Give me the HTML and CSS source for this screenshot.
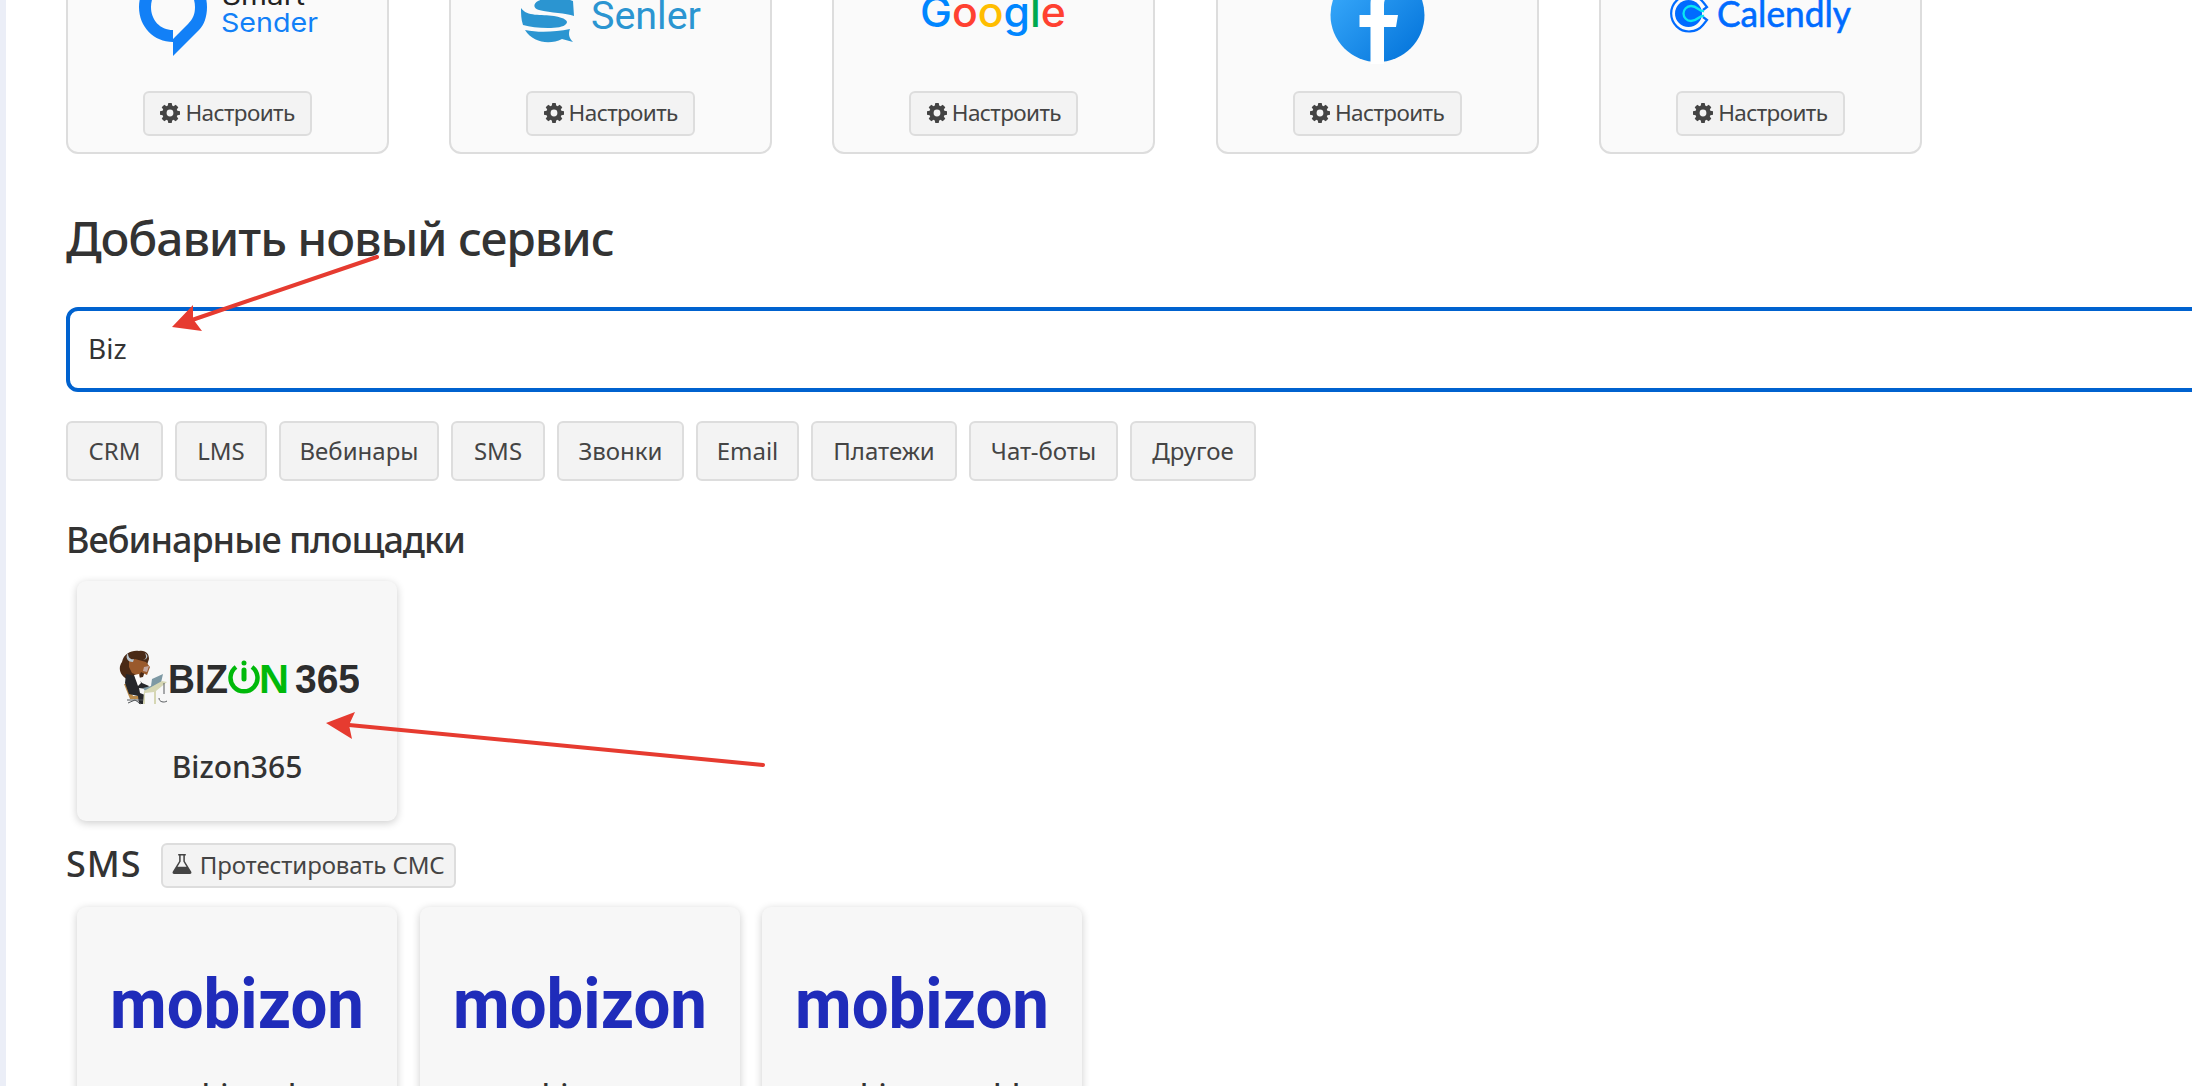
FILE: index.html
```html
<!DOCTYPE html>
<html lang="ru">
<head>
  <meta charset="UTF-8">
  <title>Интеграции</title>
  <link rel="stylesheet" href="styles.css">
</head>
<body>
  <!-- Shared icons -->
  <svg class="sprite">
    <symbol id="cog" viewBox="0 0 20 20">
      <path fill-rule="evenodd" d="M8.3 0h3.4l.5 2.6 1.3.6L15.700 1.700l2.600 2.600-1.500 2.200.6 1.300 2.600.5v3.400l-2.600.5-.6 1.300 1.500 2.200-2.600 2.600-2.200-1.500-1.300.6-.5 2.600H8.300l-.5-2.600-1.300-.6-2.200 1.500-2.600-2.600 1.500-2.200-.6-1.300L0 11.700V8.300l2.600-.5.6-1.300L1.700 4.300l2.600-2.600 2.200 1.500 1.300-.6zM10 6.600a3.400 3.400 0 1 0 0 6.800 3.400 3.400 0 0 0 0-6.800z"/>
    </symbol>
    <symbol id="flask" viewBox="0 0 20 21">
      <path fill-rule="evenodd" d="M6 0h8v1.500h-1v6l6.600 11c.8 1.300.1 2.500-1.300 2.500H1.700C.3 21-.4 19.800.4 18.500L7 7.500v-6H6zM8.600 1.500V8l-3.300 5.500h9.400L11.400 8V1.500z"/>
    </symbol>
    <symbol id="mobizon" viewBox="0 0 248 54">
      <text class="mobizon-text" x="-3" y="53" textLength="254" lengthAdjust="spacingAndGlyphs">mobizon</text>
    </symbol>
  </svg>

  <main class="page">
    <!-- Connected services -->
    <section class="connected">
      <div class="service">
        <svg class="service-logo" viewBox="0 0 240 130">
          <path fill="#1280f7" fill-rule="evenodd" d="M65 18c19 0 34 15 34 35 0 10-3 18-8 23L65 102V88C46 88 31 73 31 53S46 18 65 18zM65 30c-13 0-22 10-22 23s9 23 22 23v9l15-15c5-5 7-10 7-17 0-13-9-23-22-23z"/>
          <text class="smart" x="114" y="51" textLength="83" lengthAdjust="spacingAndGlyphs">Smart</text>
          <text class="smart sender" x="113" y="78" textLength="97" lengthAdjust="spacingAndGlyphs">Sender</text>
        </svg>
        <button class="btn btn-config"><svg class="icon"><use href="#cog"/></svg>Настроить</button>
      </div>
      <div class="service">
        <svg class="service-logo" viewBox="0 0 240 130">
          <g fill="#2b95d1">
            <path d="M82 47l1 15c-8-3-23-3-35-6-6-2-6-6-1-9 8-4 25-4 35 0z"/>
            <path d="M30 54c6 9 20 6 33 8 11 2 15 5 12 8-2 3-10 4-18 4-10 0-18-1-25-3-2-6-2-11-2-17z"/>
            <path d="M34 76c14 3 30 2 45-1-2 5-1 9 3 13l-11-3c-12 6-29 4-37-9z"/>
          </g>
          <text class="senler" x="100" y="75" textLength="110" lengthAdjust="spacingAndGlyphs">Senler</text>
        </svg>
        <button class="btn btn-config"><svg class="icon"><use href="#cog"/></svg>Настроить</button>
      </div>
      <div class="service">
        <svg class="service-logo" viewBox="0 0 240 130">
          <text class="google" x="46" y="73" textLength="146" lengthAdjust="spacingAndGlyphs"><tspan fill="#0086ff">G</tspan><tspan fill="#ff4131">o</tspan><tspan fill="#ffbd00">o</tspan><tspan fill="#0086ff">g</tspan><tspan fill="#00a94f">l</tspan><tspan fill="#ff4131">e</tspan></text>
        </svg>
        <button class="btn btn-config"><svg class="icon"><use href="#cog"/></svg>Настроить</button>
      </div>
      <div class="service">
        <svg class="service-logo" viewBox="0 0 240 130">
          <defs>
            <linearGradient id="fb" x1="0" y1="0" x2="1" y2="1">
              <stop offset="0" stop-color="#3fb0ff"/>
              <stop offset="1" stop-color="#0070d8"/>
            </linearGradient>
          </defs>
          <circle cx="120.500" cy="61" r="47" fill="url(#fb)"/>
          <path fill="#fff" d="M113.500 110V73h-11V61h11V50c0-13 8-20 19-20h8v11h-5c-6 0-8.500 4-8.500 10v10h14l-2 12h-12v37z"/>
        </svg>
        <button class="btn btn-config"><svg class="icon"><use href="#cog"/></svg>Настроить</button>
      </div>
      <div class="service">
        <svg class="service-logo" viewBox="0 0 240 130">
          <path fill="none" stroke="#006bff" stroke-width="2.200" d="M63 48a18 18 0 1 0 0 23l4-5-4-3M63 48l4 5-4 3"/>
          <circle cx="48.500" cy="59.500" r="13.500" fill="#006bff"/>
          <path fill="none" stroke="#0ae8f0" stroke-width="2.300" d="M64 57c-5 1-6-5-13-5a7.500 7.500 0 0 0 0 15c7 0 8-6 13-5"/>
          <text class="calendly" x="77" y="73" textLength="134" lengthAdjust="spacingAndGlyphs">Calendly</text>
        </svg>
        <button class="btn btn-config"><svg class="icon"><use href="#cog"/></svg>Настроить</button>
      </div>
    </section>

    <!-- Search -->
    <h1>Добавить новый сервис</h1>
    <input class="search" type="text" value="Biz">

    <div class="filters">
      <button class="btn btn-crm">CRM</button>
      <button class="btn btn-lms">LMS</button>
      <button class="btn btn-webinars">Вебинары</button>
      <button class="btn btn-sms">SMS</button>
      <button class="btn btn-calls">Звонки</button>
      <button class="btn btn-email">Email</button>
      <button class="btn btn-payments">Платежи</button>
      <button class="btn btn-bots">Чат-боты</button>
      <button class="btn btn-other">Другое</button>
    </div>

    <!-- Webinar platforms -->
    <h2>Вебинарные площадки</h2>
    <div class="cards">
      <div class="card">
        <svg class="bizon-logo" viewBox="0 0 240 56">
          <!-- bison at the desk -->
          <path fill="#4a2a16" d="M3 12C5 3 13 0 20 1c7-1 10 3 10 8l-6 18-14 3C2 27-2 19 3 12z"/>
          <path fill="#9a5a2c" d="M10 11l6-2 11 3 4 5-3 8-6-3-2 4-7-3-3-6z"/>
          <path fill="#b9c6cf" d="M9 3c0 5 3 7 6 6l-1 3C8 12 6 7 9 3zM26 3c2 4 1 6-2 7l3-1c2-2 2-4-1-6z"/>
          <path fill="#c3a7a0" d="M25 17l5-1-2 6-4-1z"/>
          <path fill="#b98a4a" d="M5 34h4l5 12h10v3H11z"/>
          <path fill="#26272b" d="M7 24l10 2 6 7 7 3-2 3-8-1 1 5 5 2-2 9h-4l-1-8-9-2-4-11z"/>
          <path fill="#fff" d="M15 25l5-1 2 9-3 3z"/>
          <path fill="#7d99a4" d="M33 29l11-5-3 13-15 4-2-3 8-2z"/>
          <path fill="#d6d7b4" d="M25 41l18-10 5 1-11 9v13h-2V42l-9 1v11h-2z"/>
          <path fill="none" stroke="#55595c" d="M45 33v11M8 50h16M9 53l7-3 6 4M40 48c0 4 5 5 8 3"/>
          <text class="bizon-text" x="49" y="43" textLength="60" lengthAdjust="spacingAndGlyphs">BIZ</text>
          <path fill="none" stroke="#00b90a" stroke-width="4.500" d="M117 17a13.500 13.500 0 1 0 16 0"/>
          <path stroke="#00b90a" stroke-width="5" stroke-linecap="round" d="M125 20v9M125 13v.1"/>
          <text class="bizon-text green" x="140" y="43" textLength="30" lengthAdjust="spacingAndGlyphs">N</text>
          <text class="bizon-text" x="176" y="43" textLength="65" lengthAdjust="spacingAndGlyphs">365</text>
        </svg>
        <div class="card-title">Bizon365</div>
        <!-- pointer to the found service -->
        <svg class="arrow arrow-card" viewBox="0 0 440 60">
          <path d="M23 12L437 52"/>
          <path class="head" d="M0 10L29-1L23 12L26 26z"/>
        </svg>
      </div>
    </div>

    <!-- SMS -->
    <h2 class="with-button">
      <span class="sms-title">SMS</span>
      <button class="btn btn-test"><svg class="icon"><use href="#flask"/></svg>Протестировать СМС</button>
    </h2>
    <div class="cards">
      <div class="card">
        <svg class="mobizon-logo"><use href="#mobizon"/></svg>
        <div class="card-title mobizon-title">mobizon.kz</div>
      </div>
      <div class="card">
        <svg class="mobizon-logo"><use href="#mobizon"/></svg>
        <div class="card-title mobizon-title">mobizon.ua</div>
      </div>
      <div class="card">
        <svg class="mobizon-logo"><use href="#mobizon"/></svg>
        <div class="card-title mobizon-title">mobizon.gmbh</div>
      </div>
    </div>

    <!-- pointer to the search field -->
    <svg class="arrow arrow-search" viewBox="0 0 210 80">
      <path d="M20 65L205 2"/>
      <path class="head" d="M0 72L21 50L21 64L30 76z"/>
    </svg>
  </main>
</body>
</html>
```
FILE: styles.css
```css
* {
  box-sizing: border-box;
}

body {
  margin: 0;
  height: 1086px;
  overflow: hidden;
  background: #fff;
  color: #333;
  font-family: "Noto Sans", sans-serif;
}

.sprite {
  display: none;
}

.page {
  position: relative;
  height: 1086px;
  padding-left: 60px;
  border-left: 6px solid #ebeef7;
  overflow: hidden;
}

/* Connected services */
.connected {
  display: flex;
  gap: 60.200px;
  margin-top: -50px;
}

.service {
  display: flex;
  flex: none;
  flex-direction: column;
  align-items: center;
  width: 323px;
  height: 204px;
  padding-top: 2px;
  border: 2px solid #ddd;
  border-radius: 12px;
  background: #fafafa;
}

.service-logo {
  flex: none;
  width: 240px;
  height: 130px;
}

.btn {
  display: flex;
  flex: none;
  align-items: center;
  justify-content: center;
  padding: 0 0 2px;
  border: 2px solid #ddd;
  border-radius: 6px;
  background: #f3f3f3;
  color: #444;
  font-family: inherit;
  font-size: 24px;
  white-space: nowrap;
}

.btn-config {
  gap: 5px;
  width: 169px;
  height: 45px;
  margin-top: 7px;
  font-size: 22.500px;
  letter-spacing: -0.6px;
}

.icon {
  width: 20px;
  height: 20px;
  fill: #444;
}

/* Logo lettering */
.smart {
  fill: #222;
  font: 26px Inter, sans-serif;
}

.sender {
  fill: #1280f7;
}

.senler {
  fill: #2b95d1;
  font: 39px Roboto, sans-serif;
}

.google {
  font: 500 42px Inter, sans-serif;
}

.calendly {
  fill: #006bff;
  stroke: #006bff;
  stroke-width: 0.6px;
  font: 37px Lato, sans-serif;
}

.bizon-text {
  fill: #2d2d2d;
  font: bold 41px "Liberation Sans", sans-serif;
}

.green {
  fill: #00b90a;
}

.mobizon-text {
  fill: #1f2cba;
  font: bold 71px Roboto, sans-serif;
}

/* Search */
h1 {
  height: 66px;
  margin: 51px 0 0;
  font-size: 48px;
  font-weight: 500;
  line-height: 66px;
  letter-spacing: -1.1px;
}

.search {
  display: block;
  width: 2300px;
  height: 85px;
  margin-top: 36px;
  padding: 0 18px 4px;
  border: 4px solid #0062cf;
  border-radius: 12px;
  outline: none;
  color: #333;
  font-family: inherit;
  font-size: 28px;
}

.filters {
  display: flex;
  gap: 12px;
  margin-top: 29px;
}

.filters .btn {
  height: 60px;
}

.btn-crm { width: 97px; }
.btn-lms { width: 92px; }
.btn-webinars { width: 160px; }
.btn-sms { width: 94px; }
.btn-calls { width: 127px; }
.btn-email { width: 103px; }
.btn-payments { width: 146px; }
.btn-bots { width: 149px; }
.btn-other { width: 126px; }

h2 {
  display: flex;
  align-items: center;
  height: 50px;
  margin: 33px 0 17px;
  font-size: 36px;
  font-weight: 500;
  letter-spacing: -1px;
}

.with-button {
  gap: 19px;
  height: 44px;
  margin: 22px 0 20px;
}

.sms-title {
  position: relative;
  top: -2px;
  letter-spacing: 1px;
}

.btn-test {
  gap: 8px;
  width: 295px;
  height: 45px;
  letter-spacing: -0.1px;
}

/* Service cards */
.cards {
  display: flex;
  gap: 22.500px;
  padding-left: 11px;
}

.card {
  position: relative;
  display: flex;
  flex: none;
  flex-direction: column;
  align-items: center;
  width: 320px;
  height: 240px;
  border-radius: 9px;
  background: #f7f7f7;
  box-shadow: 0 2px 9px rgba(0, 0, 0, 0.2);
}

.bizon-logo {
  width: 240px;
  height: 56px;
  margin: 69px 0 0 4px;
}

.mobizon-logo {
  width: 248px;
  height: 54px;
  margin-top: 68px;
}

.card-title {
  margin-top: 41px;
  font-size: 30px;
  font-weight: 500;
  line-height: 40px;
}

.mobizon-title {
  margin-top: 46px;
}

/* Red pointers */
.arrow {
  position: absolute;
  overflow: visible;
  fill: none;
  stroke: #e63b30;
  stroke-width: 4;
  stroke-linecap: round;
}

.arrow .head {
  fill: #e63b30;
  stroke: none;
}

.arrow-search {
  top: 255px;
  left: 166px;
  width: 210px;
  height: 80px;
}

.arrow-card {
  top: 132px;
  left: 249px;
  z-index: 1;
  width: 440px;
  height: 60px;
}
```
